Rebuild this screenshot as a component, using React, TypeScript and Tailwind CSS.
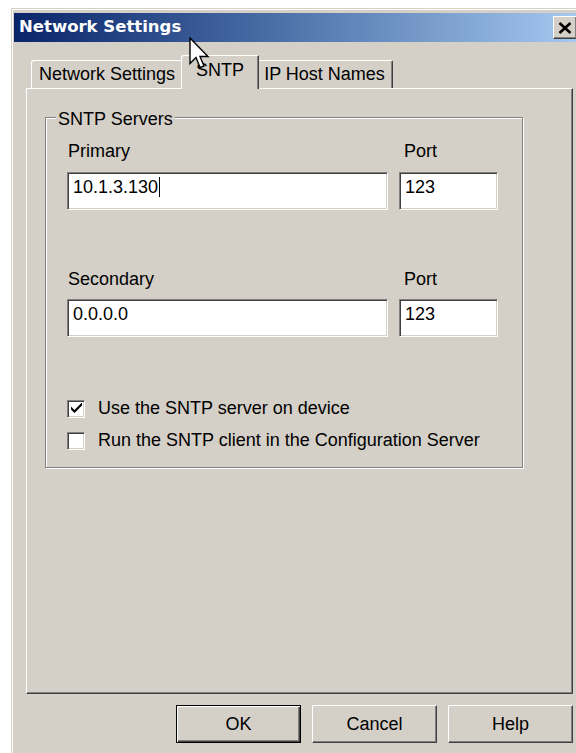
import type { ReactNode } from 'react';

const sans = "font-['Liberation_Sans',Arial,sans-serif]";

function Field({ value, width, caret }: { value: string; width: string; caret?: boolean }) {
  return (
    <div
      className={`${width} h-[38px] bg-white border-t border-l border-[#808080] border-b border-r border-b-white border-r-white shadow-[inset_1px_1px_0_#404040,inset_-1px_-1px_0_#d4d0c8] pl-[5px] pt-[4px] text-[18px] leading-[21px] flex items-start`}
    >
      <span>{value}</span>
      {caret && <span className="w-px h-[20px] bg-black ml-[1px]" />}
    </div>
  );
}

function CheckRow({ checked, children }: { checked?: boolean; children: ReactNode }) {
  return (
    <div className="flex items-center h-[21px]">
      <div className="w-[18px] h-[18px] bg-white border-t border-l border-[#808080] border-b border-r border-b-white border-r-white shadow-[inset_1px_1px_0_#404040,inset_-1px_-1px_0_#d4d0c8] flex items-center justify-center">
        {checked && (
          <svg width="11" height="11" viewBox="0 0 7 7">
            <path d="M0 2.2 L0 4.2 L2.2 6.4 L7 1.6 L7 -0.4 L2.2 4.4 Z" fill="#000" />
          </svg>
        )}
      </div>
      <span className="ml-[13px] text-[18px] leading-[21px]">{children}</span>
    </div>
  );
}

function Button({ label, primary }: { label: string; primary?: boolean }) {
  const edge = primary
    ? 'border border-black shadow-[inset_1px_1px_0_#fff,inset_-1px_-1px_0_#404040,inset_-2px_-2px_0_#808080]'
    : 'border border-t-white border-l-white border-b-[#404040] border-r-[#404040] shadow-[inset_-1px_-1px_0_#808080]';
  return (
    <button className={`w-[125px] h-[38px] bg-[#d4d0c8] ${edge} text-[18px] leading-[21px] flex items-center justify-center`}>
      {label}
    </button>
  );
}

export default function App() {
  return (
    <div className={`relative w-[576px] h-[753px] overflow-hidden bg-white pl-[11px] pt-[8px] text-black ${sans}`}>
      {/* dialog frame */}
      <div className="w-[600px] h-[760px] border-l border-t border-[#d4d0c8]">
        <div className="w-full h-full border-l border-t border-white bg-[#d4d0c8] pl-[1px] pt-[3px]">
          {/* caption */}
          <div className="w-[566px] h-[29px] flex items-center bg-linear-to-r from-[#0a246a] to-[#a6caf0]">
            <span className="pl-[5px] text-white font-bold text-[16.5px] font-['DejaVu_Sans',sans-serif]">
              Network Settings
            </span>
            <div className="ml-auto mr-[3px] w-[24px] h-[23px] bg-[#d4d0c8] border border-t-white border-l-white border-b-[#404040] border-r-[#404040] shadow-[inset_-1px_-1px_0_#808080] flex items-center justify-center">
              <svg width="14" height="12" viewBox="0 0 14 12">
                <path d="M1.5 1 L12.5 11 M12.5 1 L1.5 11" stroke="#000" strokeWidth="2.6" />
              </svg>
            </div>
          </div>

          <div className="ml-[12px] w-[547px]">
            {/* tab strip */}
            <div className="mt-[13px] h-[33px] flex items-end pl-[5px]">
              <div className="w-[152px] h-[28px] border-t border-l border-white border-r border-r-[#404040] shadow-[inset_-1px_0_0_#808080] rounded-tl-[3px] text-[18px] leading-[21px] flex items-center justify-center">
                Network Settings
              </div>
              <div className="relative z-10 -ml-[2px] -mb-px w-[78px] h-[34px] bg-[#d4d0c8] border-t border-l border-white border-r border-r-[#404040] shadow-[inset_-1px_0_0_#808080] rounded-tl-[3px] text-[18px] leading-[21px] flex items-center justify-center pb-[4px]">
                SNTP
              </div>
              <div className="-ml-[2px] w-[136px] h-[28px] border-t border-white border-r border-r-[#404040] shadow-[inset_-1px_0_0_#808080] rounded-tr-[2px] text-[18px] leading-[21px] flex items-center justify-center">
                IP Host Names
              </div>
            </div>

            {/* tab page */}
            <div className="h-[606px] border-t border-l border-white border-r border-b border-r-[#404040] border-b-[#404040] shadow-[inset_-1px_-1px_0_#808080] pt-[28px] pl-[18px]">
              <div className="w-[478px] h-[351px] border border-[#808080] shadow-[inset_1px_1px_0_#fff,1px_1px_0_#fff] flex flex-col">
                <div className="-mt-[9px] ml-[10px] px-[2px] w-fit bg-[#d4d0c8] text-[18px] leading-[21px]">
                  SNTP Servers
                </div>

                <div className="pl-[21px] mt-[11px] flex flex-col">
                  <div className="flex gap-[11px]">
                    <div className="flex flex-col">
                      <span className="ml-[1px] text-[18px] leading-[21px]">Primary</span>
                      <div className="mt-[10px]">
                        <Field value="10.1.3.130" width="w-[321px]" caret />
                      </div>
                    </div>
                    <div className="flex flex-col">
                      <span className="ml-[5px] text-[18px] leading-[21px]">Port</span>
                      <div className="mt-[10px]">
                        <Field value="123" width="w-[99px]" />
                      </div>
                    </div>
                  </div>

                  <div className="flex gap-[11px] mt-[59px]">
                    <div className="flex flex-col">
                      <span className="ml-[1px] text-[18px] leading-[21px]">Secondary</span>
                      <div className="mt-[9px]">
                        <Field value="0.0.0.0" width="w-[321px]" />
                      </div>
                    </div>
                    <div className="flex flex-col">
                      <span className="ml-[5px] text-[18px] leading-[21px]">Port</span>
                      <div className="mt-[9px]">
                        <Field value="123" width="w-[99px]" />
                      </div>
                    </div>
                  </div>

                  <div className="mt-[61px] flex flex-col gap-[11px]">
                    <CheckRow checked>Use the SNTP server on device</CheckRow>
                    <CheckRow>Run the SNTP client in the Configuration Server</CheckRow>
                  </div>
                </div>
              </div>
            </div>

            {/* dialog buttons */}
            <div className="mt-[11px] flex justify-end gap-[11px]">
              <Button label="OK" primary />
              <Button label="Cancel" />
              <Button label="Help" />
            </div>
          </div>
        </div>
      </div>

      {/* mouse pointer */}
      <svg className="absolute z-20 left-[189px] top-[37px]" width="22" height="34" viewBox="0 0 22 34">
        <path
          d="M1 1 L1 26.5 L7 20.5 L11 30.5 L15 29 L11 19.5 L19 19.5 Z"
          fill="#fff"
          stroke="#000"
          strokeWidth="1.4"
          strokeLinejoin="miter"
        />
      </svg>
    </div>
  );
}
